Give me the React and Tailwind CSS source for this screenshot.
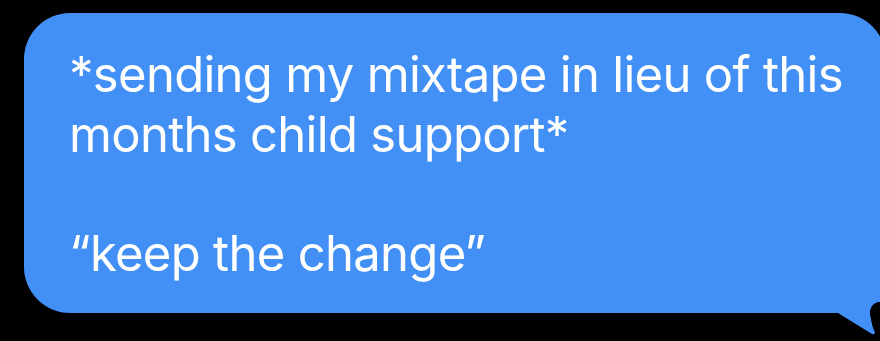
export default function App() {
  return (
    <div className="relative w-[880px] h-[341px] bg-black overflow-hidden pt-[13px] pl-[24px]">
      <div
        className="w-[862px] h-[300px] rounded-[46px] rounded-br-none bg-[#4290f5] pl-[45px] pt-[32px] text-white text-[49px] leading-[59.5px] tracking-[-0.7px]"
        style={{ fontFamily: 'Inter, "Noto Sans", sans-serif' }}
      >
        <div>*sending my mixtape in lieu of this</div>
        <div>months child support*</div>
        <div>&nbsp;</div>
        <div>“keep the change”</div>
      </div>
      <svg
        className="absolute left-[830px] top-[280px]"
        width="50"
        height="61"
        viewBox="0 0 50 61"
      >
        <path d="M0 30 H50 V61 H0 Z" fill="#000" />
        <path
          d="M0 20 H50 V22 C42 22 38 30 41 38 C42 45 44 50 45 52 Q45 55 42 54 L8 33 L0 33 Z"
          fill="#4290f5"
        />
        <path d="M50 22 C42 22 38 30 41 38 C42 45 44 50 45 52 L50 61 Z" fill="#000" />
      </svg>
    </div>
  );
}
